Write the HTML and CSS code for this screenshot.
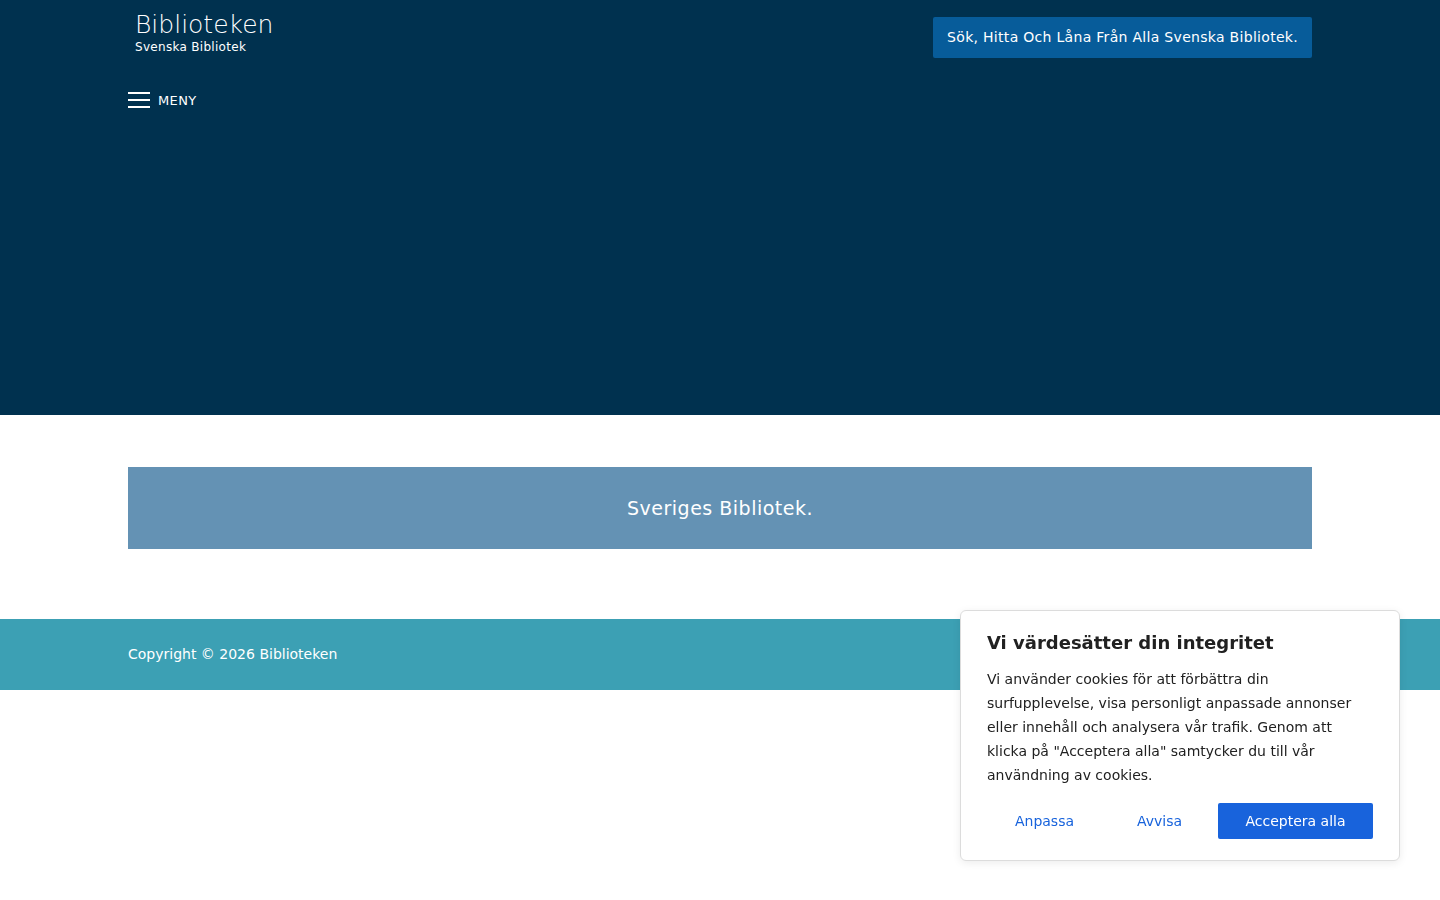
FILE: index.html
```html
<!DOCTYPE html>
<html lang="sv">
<head>
    <meta charset="UTF-8">
    <title>Biblioteken</title>
    <link rel="stylesheet" href="styles.css">
</head>
<body>
    <header id="site-header">
        <div class="wrap top">
            <div class="brand">
                <div class="brand-title">Biblioteken</div>
                <div class="brand-sub">Svenska Bibliotek</div>
            </div>
            <a class="search-btn" href="#">Sök, Hitta Och Låna Från Alla Svenska Bibliotek.</a>
        </div>
        <div class="wrap">
            <button class="menu-toggle">
                <span class="burger"><i></i><i></i><i></i></span>
                MENY
            </button>
        </div>
    </header>

    <main class="wrap content">
        <div class="banner">Sveriges Bibliotek.</div>
    </main>

    <footer id="site-footer">
        <div class="wrap">Copyright © 2026 Biblioteken</div>
    </footer>

    <div class="cookie-box">
        <h2>Vi värdesätter din integritet</h2>
        <p>Vi använder cookies för att förbättra din surfupplevelse, visa personligt anpassade annonser eller innehåll och analysera vår trafik. Genom att klicka på "Acceptera alla" samtycker du till vår användning av cookies.</p>
        <div class="cookie-actions">
            <button class="ck-link">Anpassa</button>
            <button class="ck-link">Avvisa</button>
            <button class="ck-accept">Acceptera alla</button>
        </div>
    </div>
</body>
</html>
```

FILE: styles.css
```css
body {
    margin: 0;
    font-family: "DejaVu Sans", sans-serif;
    background: #fff;
    color: #222;
}
.wrap {
    width: 1184px;
    margin: 0 auto;
}
#site-header {
    background-color: #00314f;
    height: 415px;
    color: #fff;
}
.top {
    display: flex;
    justify-content: space-between;
    align-items: flex-start;
}
.brand {
    padding: 10px 0 0 7px;
}
.brand-title {
    font-size: 25px;
    font-weight: 200;
    line-height: 30px;
}
.brand-sub {
    font-size: 12px;
    line-height: 14px;
    letter-spacing: 0.3px;
}
.search-btn {
    margin-top: 17px;
    background-color: #075c9a;
    color: #fff;
    text-decoration: none;
    font-size: 14px;
    height: 41px;
    line-height: 41px;
    padding: 0 14px;
    border-radius: 2px;
    letter-spacing: 0.3px;
}
.menu-toggle {
    margin-top: 34px;
    display: flex;
    align-items: center;
    gap: 8px;
    background: none;
    border: none;
    padding: 0;
    color: #fff;
    font-family: inherit;
    font-size: 13px;
    letter-spacing: 0.4px;
}
.burger {
    display: flex;
    flex-direction: column;
    gap: 5px;
    width: 22px;
}
.burger i {
    display: block;
    height: 2px;
    background: #fff;
}
.content {
    padding: 52px 0 70px;
}
.banner {
    background-color: #6492b4;
    height: 82px;
    line-height: 82px;
    text-align: center;
    color: #fff;
    font-size: 19px;
    letter-spacing: 0.5px;
}
#site-footer {
    background-color: #3ca0b4;
    height: 71px;
    line-height: 71px;
    color: #fff;
    font-size: 14px;
}
.cookie-box {
    position: fixed;
    left: 960px;
    top: 610px;
    width: 386px;
    padding: 21px 26px 21px 26px;
    background: #fff;
    border: 1px solid #dcdcdc;
    border-radius: 6px;
    box-shadow: 0 2px 8px rgba(0, 0, 0, 0.08);
}
.cookie-box h2 {
    margin: 0 0 14px;
    font-size: 18px;
    font-weight: bold;
    color: #212121;
}
.cookie-box p {
    margin: 0 0 16px;
    font-size: 14px;
    line-height: 24px;
    color: #212121;
}
.cookie-actions {
    display: flex;
}
.cookie-actions button {
    height: 36px;
    font-family: inherit;
    font-size: 14px;
    border-radius: 2px;
    cursor: pointer;
}
.ck-link {
    background: none;
    border: none;
    color: #1863dc;
    width: 115px;
}
.ck-accept {
    margin-left: 1px;
    width: 155px;
    background-color: #1863dc;
    border: none;
    color: #fff;
}
```
